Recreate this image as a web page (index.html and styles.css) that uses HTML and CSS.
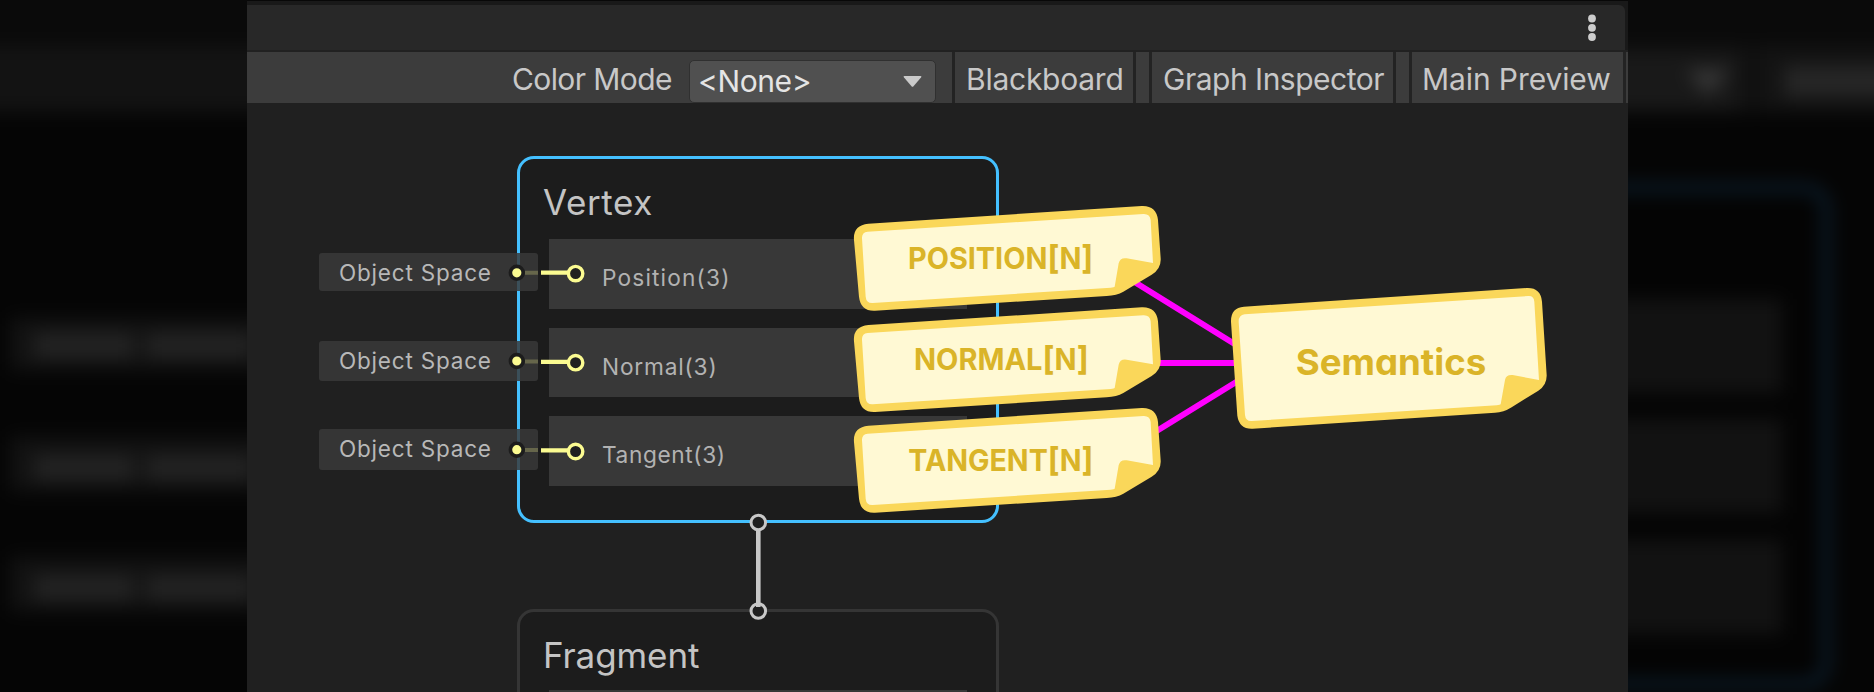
FILE: index.html
```html
<!DOCTYPE html>
<html lang="en">
<head>
<meta charset="utf-8">
<title>Shader Graph – Vertex semantics</title>
<link rel="stylesheet" href="styles.css">
</head>
<body>
<div class="stage">
  <svg class="backdrop" viewBox="0 0 1874 692" aria-hidden="true">
    <defs><filter id="soft" x="-5%" y="-5%" width="110%" height="110%" color-interpolation-filters="sRGB"><feGaussianBlur stdDeviation="9"/></filter></defs>
    <g filter="url(#soft)">
      <rect x="-60" y="-60" width="1994" height="106" fill="#0a0a0a"/>
      <rect x="-60" y="46" width="1994" height="66" fill="#131313"/>
      <rect x="1500" y="54" width="238" height="56" fill="#191919"/>
      <path d="M1686 70h44l-22 25z" fill="#383838"/>
      <rect x="1748" y="42" width="6" height="72" fill="#0a0a0a"/>
      <rect x="1784" y="66" width="120" height="31" fill="#262626"/>
      <rect x="-60" y="113" width="1994" height="640" fill="#050505"/>
      <rect x="1300" y="188" width="526" height="496" rx="20" fill="#040404" stroke="#10304a" stroke-width="5"/>
      <g fill="#121212">
        <rect x="1300" y="299" width="482" height="94"/><rect x="1300" y="419" width="482" height="94"/><rect x="1300" y="540" width="482" height="94"/>
        <rect x="10" y="318" width="300" height="52"/><rect x="10" y="437" width="300" height="54"/><rect x="10" y="557" width="300" height="54"/>
      </g>
      <g fill="#232323">
        <rect x="34" y="333" width="100" height="25"/><rect x="146" y="333" width="106" height="25"/>
        <rect x="34" y="455" width="100" height="25"/><rect x="146" y="455" width="106" height="25"/>
        <rect x="34" y="575" width="100" height="25"/><rect x="146" y="575" width="106" height="25"/>
      </g>
    </g>
  </svg>

  <main class="window">
    <header class="titlebar">
      <div class="tab-area">
        <svg class="kebab" viewBox="0 0 10 28"><circle cx="5" cy="4.5" r="3.9"/><circle cx="5" cy="13.8" r="3.9"/><circle cx="5" cy="23" r="3.9"/></svg>
      </div>
    </header>
    <nav class="toolbar">
      <span class="mode-label">Color Mode</span>
      <div class="dropdown"><span class="dropdown-value">&lt;None&gt;</span><svg class="caret" viewBox="0 0 18 11"><path d="M1 0H17Q18.500 0 17.500 1.500L10 10.300Q9 11.300 8 10.300L.5 1.500Q-.5 0 1 0Z"/></svg></div>
      <span class="tool blackboard">Blackboard</span>
      <span class="tool inspector">Graph Inspector</span>
      <span class="tool preview">Main Preview</span>
    </nav>

    <section class="canvas">
      <article class="node vertex">
        <h2 class="node-title">Vertex</h2>
        <div class="slots">
          <div class="slot position">Position(3)</div>
          <div class="slot normal">Normal(3)</div>
          <div class="slot tangent">Tangent(3)</div>
        </div>
      </article>
      <article class="node fragment">
        <h2 class="node-title">Fragment</h2>
        <div class="slots"><div class="slot"></div></div>
      </article>
      <div class="pill pill-1">Object Space</div>
      <div class="pill pill-2">Object Space</div>
      <div class="pill pill-3">Object Space</div>

      <svg class="overlay" viewBox="247 103 1381 589">
        <g class="link">
          <path class="faint" d="M525 272.700H538M525 361.500H538M525 450H538"/>
          <path class="bright" d="M541 272.700H569M541 361.800H569M541 450.300H569"/>
          <circle class="ring" cx="575.600" cy="273.600" r="7.200"/><circle class="ring" cx="575.600" cy="362.700" r="7.200"/><circle class="ring" cx="575.600" cy="451.500" r="7.200"/>
          <circle class="pin" cx="516.800" cy="272.800" r="6.400"/><circle class="pin" cx="516.800" cy="361" r="6.400"/><circle class="pin" cx="516.800" cy="449.700" r="6.400"/>
        </g>
        <g class="stack-link">
          <circle cx="758.300" cy="522.500" r="7.300"/><circle cx="758.300" cy="611" r="7.300"/>
          <path d="M758.300 530V607"/>
        </g>
        <path class="wire" d="M1120 273L1250 353.500M1150 363H1250M1140 441.200L1250 373.500"/>
        <defs>
          <g id="note">
            <path class="note-edge" d="M42 150Q38 106 85 101L905 48Q949 46 954 90L962 205Q964 236 935 254L850 305Q830 316 800 318L105 362Q62 364 57 320Z"/>
            <path class="note-face" d="M66 145Q65 127 83 125L910 72Q930 71 932 90L939 219L860 205Q840 202 836 220L824 290Q823 292 812 293L98 339Q79 340 77 320Z"/>
          </g>
        </defs>
        <g transform="translate(840 190) scale(.33333)">
          <use href="#note"/><use href="#note" y="304"/><use href="#note" y="606"/>
          <g class="note-text">
            <text x="204" y="237" textLength="556" lengthAdjust="spacingAndGlyphs">POSITION<tspan class="bracket">[</tspan>N<tspan class="bracket">]</tspan></text>
            <text x="222" y="539" textLength="524" lengthAdjust="spacingAndGlyphs">NORMAL<tspan class="bracket">[</tspan>N<tspan class="bracket">]</tspan></text>
            <text x="205" y="843" textLength="555" lengthAdjust="spacingAndGlyphs">TANGENT<tspan class="bracket">[</tspan>N<tspan class="bracket">]</tspan></text>
          </g>
        </g>
        <g transform="translate(1200 270) scale(.33333)">
          <path class="note-edge" d="M93 155Q92 113 132 110L980 54Q1022 52 1026 95L1040 315Q1041 345 1015 362L935 412Q910 428 885 428L158 476Q118 478 112 437Z"/>
          <path class="note-face" d="M116 155Q116 135 134 133L985 78Q1002 77 1003 95L1017 330L938 315Q918 313 915 330L902 403Q901 405 890 406L155 453Q137 454 135 435Z"/>
          <text class="note-text big" x="287" y="316" textLength="572" lengthAdjust="spacingAndGlyphs">Semantics</text>
        </g>
      </svg>
    </section>
  </main>
</div>
</body>
</html>
```
FILE: styles.css
```css
* { box-sizing: border-box; }
body { margin: 0; background: #050505; font-family: Inter, "Noto Sans", sans-serif; }
.stage { position: relative; display: flex; justify-content: center; width: 1874px; height: 692px; overflow: hidden; }
.backdrop { position: absolute; inset: 0; width: 1874px; height: 692px; }
.window { position: relative; display: flex; flex-direction: column; width: 1381px; height: 692px; margin-left: 1px; background: #202020; overflow: hidden; }

.titlebar { height: 50px; padding: 4px 3px 0 0; background: #191919; border-top: 1px solid #080808; flex: none; }
.tab-area { display: flex; justify-content: flex-end; height: 45px; padding: 9px 28px 0 0; background: #282828; border-top-right-radius: 6px; }
.kebab { width: 10px; height: 28px; fill: #cdcdcd; }

.toolbar { display: flex; flex: none; height: 53px; border-top: 2px solid #212121; background: #3c3c3c; color: #c8c8c8; font-size: 30px; line-height: 54px; white-space: nowrap; }
.mode-label { width: 442px; padding-left: 265px; letter-spacing: -.6px; }
.dropdown { display: flex; justify-content: space-between; align-items: center; width: 247px; height: 43px; margin-top: 8px; padding: 0 13px 0 8px; background: #505050; border: 1px solid #303030; border-radius: 5px; color: #e4e4e4; letter-spacing: -.4px; }
.dropdown-value { padding-bottom: 2px; }
.caret { width: 19px; height: 11px; fill: #cacaca; margin-top: -1px; }
.tool { border: solid #232323; border-width: 0 3px; }
.blackboard { width: 184px; margin-left: 16px; padding-left: 11px; letter-spacing: -.25px; }
.inspector { width: 247px; margin-left: 13px; padding-left: 11px; letter-spacing: -.5px; }
.preview { width: 217px; margin-left: 13px; padding-left: 10px; letter-spacing: -.1px; }

.canvas { position: relative; flex: 1; }
.node { position: absolute; left: 270px; width: 482px; padding: 24px 29px 0; border: 3px solid #44c0ff; border-radius: 17px; background: #1c1c1c; }
.vertex { top: 53px; height: 367px; }
.fragment { top: 506px; height: 200px; border: 3px solid #353535; }
.node-title { margin: 0 0 16px -6px; height: 40px; color: #c4c4c4; font-weight: 400; font-size: 35px; line-height: 38px; letter-spacing: .6px; }
.fragment .node-title { margin-bottom: 14px; letter-spacing: -.1px; }
.slots { display: grid; gap: 19px; width: 418px; }
.slot { height: 69.5px; padding: 7px 0 0 53px; background: #383838; color: #b2b2b2; font-size: 22.7px; line-height: 64px; letter-spacing: 1px; }
.position { letter-spacing: 1.15px; }
.normal { letter-spacing: .8px; }
.tangent { letter-spacing: .6px; }
.pill { position: absolute; left: 72px; width: 219px; height: 40px; padding-left: 20px; border-radius: 3px; background: rgba(57, 57, 57, .84); color: #b8b8b8; font-size: 22.5px; line-height: 40px; letter-spacing: .8px; }
.pill-1 { top: 150px; height: 38px; }
.pill-2 { top: 238px; }
.pill-3 { top: 326px; height: 41px; }

.overlay { position: absolute; inset: 0; width: 1381px; height: 589px; }
.faint { stroke: #66664b; stroke-width: 4; }
.bright { stroke: #fbfb91; stroke-width: 4.300; }
.ring { fill: #202020; stroke: #fbfb91; stroke-width: 3.400; }
.pin { fill: #fbfb91; stroke: #1c1c1c; stroke-width: 3.600; }
.stack-link { fill: #202020; stroke: #c8c8c8; stroke-width: 3; }
.stack-link path { stroke-width: 4.600; }
.wire { fill: none; stroke: #f0f; stroke-width: 6; }
.note-edge { fill: #fad75a; }
.note-face { fill: #fff9d4; }
.note-text { fill: #dab428; font-size: 89px; font-weight: 700; font-feature-settings: "cv11", "ss03"; }
.bracket { font-size: 98px; }
.note-text.big { font-size: 107px; }
```
